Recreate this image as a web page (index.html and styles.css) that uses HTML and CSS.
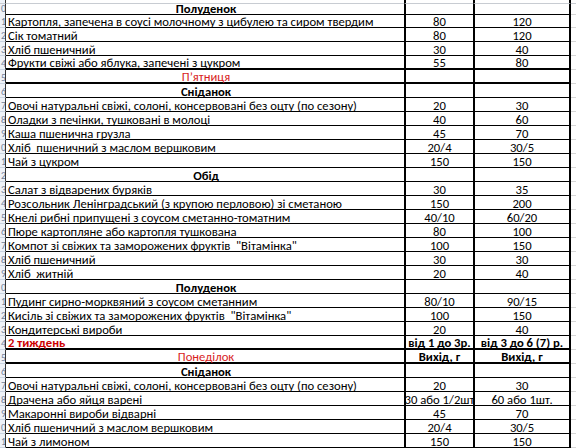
FILE: index.html
```html
<!DOCTYPE html>
<html lang="uk">
<head>
<meta charset="utf-8">
<title>Меню</title>
<link rel="stylesheet" href="styles.css">
</head>
<body>
<div class="sheet">
  <div class="row top"><div class="n"></div><div class="a"></div><div class="b"></div><div class="c"></div><div class="d"></div></div>
  <div class="row first"><div class="n"><span>0</span></div><div class="a h">Полуденок</div><div class="b"></div><div class="c"></div><div class="d"></div></div>
  <div class="row"><div class="n"><span>1</span></div><div class="a">Картопля, запечена в соусі молочному з цибулею та сиром твердим</div><div class="b">80</div><div class="c">120</div><div class="d"></div></div>
  <div class="row"><div class="n"><span>2</span></div><div class="a">Сік томатний</div><div class="b">80</div><div class="c">120</div><div class="d"></div></div>
  <div class="row"><div class="n"><span>3</span></div><div class="a">Хліб пшеничний</div><div class="b">30</div><div class="c">40</div><div class="d"></div></div>
  <div class="row tk"><div class="n"><span>4</span></div><div class="a">Фрукти свіжі або яблука, запечені з цукром</div><div class="b">55</div><div class="c">80</div><div class="d"></div></div>
  <div class="row tk"><div class="n"><span>5</span></div><div class="a day">П’ятниця</div><div class="b"></div><div class="c"></div><div class="d"></div></div>
  <div class="row"><div class="n"><span>6</span></div><div class="a h">Сніданок</div><div class="b"></div><div class="c"></div><div class="d"></div></div>
  <div class="row"><div class="n"><span>7</span></div><div class="a">Овочі натуральні свіжі, солоні, консервовані без оцту (по сезону)</div><div class="b">20</div><div class="c">30</div><div class="d"></div></div>
  <div class="row"><div class="n"><span>8</span></div><div class="a">Оладки з печінки, тушковані в молоці</div><div class="b">40</div><div class="c">60</div><div class="d"></div></div>
  <div class="row"><div class="n"><span>9</span></div><div class="a">Каша пшенична грузла</div><div class="b">45</div><div class="c">70</div><div class="d"></div></div>
  <div class="row"><div class="n"><span>0</span></div><div class="a">Хліб&nbsp; пшеничний з маслом вершковим</div><div class="b">20/4</div><div class="c">30/5</div><div class="d"></div></div>
  <div class="row"><div class="n"><span>1</span></div><div class="a">Чай з цукром</div><div class="b">150</div><div class="c">150</div><div class="d"></div></div>
  <div class="row"><div class="n"><span>2</span></div><div class="a h">Обід</div><div class="b"></div><div class="c"></div><div class="d"></div></div>
  <div class="row"><div class="n"><span>3</span></div><div class="a">Салат з відварених буряків</div><div class="b">30</div><div class="c">35</div><div class="d"></div></div>
  <div class="row"><div class="n"><span>4</span></div><div class="a">Розсольник Ленінградський (з крупою перловою) зі сметаною</div><div class="b">150</div><div class="c">200</div><div class="d"></div></div>
  <div class="row"><div class="n"><span>5</span></div><div class="a">Кнелі рибні припущені з соусом сметанно-томатним</div><div class="b">40/10</div><div class="c">60/20</div><div class="d"></div></div>
  <div class="row"><div class="n"><span>6</span></div><div class="a">Пюре картопляне або картопля тушкована</div><div class="b">80</div><div class="c">100</div><div class="d"></div></div>
  <div class="row"><div class="n"><span>7</span></div><div class="a">Компот зі свіжих та заморожених фруктів&nbsp; "Вітамінка"</div><div class="b">100</div><div class="c">150</div><div class="d"></div></div>
  <div class="row"><div class="n"><span>8</span></div><div class="a">Хліб пшеничний</div><div class="b">30</div><div class="c">30</div><div class="d"></div></div>
  <div class="row"><div class="n"><span>9</span></div><div class="a">Хліб&nbsp; житній</div><div class="b">20</div><div class="c">40</div><div class="d"></div></div>
  <div class="row"><div class="n"><span>0</span></div><div class="a h">Полуденок</div><div class="b"></div><div class="c"></div><div class="d"></div></div>
  <div class="row"><div class="n"><span>1</span></div><div class="a">Пудинг сирно-морквяний з соусом сметанним</div><div class="b">80/10</div><div class="c">90/15</div><div class="d"></div></div>
  <div class="row"><div class="n"><span>2</span></div><div class="a">Кисіль зі свіжих та заморожених фруктів&nbsp; "Вітамінка"</div><div class="b">100</div><div class="c">150</div><div class="d"></div></div>
  <div class="row"><div class="n"><span>3</span></div><div class="a">Кондитерські вироби</div><div class="b">20</div><div class="c">40</div><div class="d"></div></div>
  <div class="row tk"><div class="n"><span>4</span></div><div class="a week">2 тиждень</div><div class="b hb">від 1 до 3р.</div><div class="c hb">від 3 до 6 (7) р.</div><div class="d"></div></div>
  <div class="row tk"><div class="n"><span>5</span></div><div class="a day">Понеділок</div><div class="b hb">Вихід, г</div><div class="c hb">Вихід, г</div><div class="d"></div></div>
  <div class="row"><div class="n"><span>6</span></div><div class="a h">Сніданок</div><div class="b"></div><div class="c"></div><div class="d"></div></div>
  <div class="row"><div class="n"><span>7</span></div><div class="a">Овочі натуральні свіжі, солоні, консервовані без оцту (по сезону)</div><div class="b">20</div><div class="c">30</div><div class="d"></div></div>
  <div class="row"><div class="n"><span>8</span></div><div class="a">Драчена або яйця варені</div><div class="b">30 або 1/2шт</div><div class="c">60 або 1шт.</div><div class="d"></div></div>
  <div class="row"><div class="n"><span>9</span></div><div class="a">Макаронні вироби відварні</div><div class="b">45</div><div class="c">70</div><div class="d"></div></div>
  <div class="row"><div class="n"><span>0</span></div><div class="a">Хліб пшеничний з маслом вершковим</div><div class="b">20/4</div><div class="c">30/5</div><div class="d"></div></div>
  <div class="row"><div class="n"><span>1</span></div><div class="a">Чай з лимоном</div><div class="b">150</div><div class="c">150</div><div class="d"></div></div>
</div>
</body>
</html>
```
FILE: styles.css
```css
html, body {
  margin: 0;
  padding: 0;
  background: #ffffff;
}
.sheet {
  width: 576px;
  height: 448px;
  overflow: hidden;
  font-family: Carlito, Roboto, "Liberation Sans", sans-serif;
  font-size: 12.65px;
  color: #000;
}
.row {
  display: grid;
  grid-template-columns: 6px 398px 69px 98px 5px;
  height: 14px;
}
.row.top { height: 4px; }
.row.first { height: 10px; }
.row > div {
  box-sizing: border-box;
  border-bottom: 1px solid #000;
  display: flex;
  align-items: flex-end;
  line-height: 10px;
  white-space: nowrap;
}
.row.top > div { border-bottom-color: #c8ccd2; }
.row.tk > div { border-bottom-width: 2px; }
.row > .n {
  overflow: hidden;
  border-right: 1px solid #333;
  border-bottom-color: #c9d3e0;
  background: #eef2f8;
  justify-content: flex-end;
  color: #6e7f99;
  font-size: 10px;
  padding-right: 1px;
}
.row.tk > .n { border-bottom-width: 1px; }
.n span { margin-right: -2px; }
.row > .a { padding-left: 2px; }
.row > .b, .row > .c {
  overflow: hidden;
  justify-content: center;
  border-left: 2px solid #000;
}
.row > .c { border-right: 2px solid #000; }
.row > .d {
  overflow: hidden;
  border-bottom-color: #d6d6d6;
  border-bottom-width: 1px;
}
.row.tk > .d { border-bottom-width: 1px; }
.a.h {
  justify-content: center;
  font-weight: bold;
}
.a.day {
  justify-content: center;
  color: #d81e1e;
}
.a.week {
  color: #cc0000;
  font-weight: bold;
}
.hb { font-weight: bold; }
```
